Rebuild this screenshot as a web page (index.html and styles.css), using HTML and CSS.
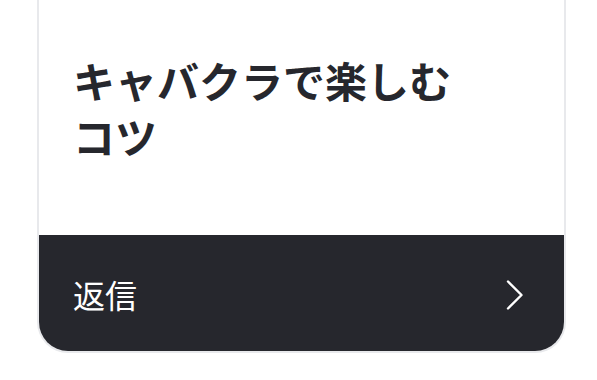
FILE: index.html
```html
<!DOCTYPE html>
<html lang="ja">
<head>
    <meta charset="UTF-8">
    <meta name="viewport" content="width=device-width, initial-scale=1.0">
    <title>キャバクラで楽しむコツ</title>
    <link rel="stylesheet" href="styles.css">
</head>
<body>
    <main class="page">
        <article class="card">
            <div class="card-body">
                <h2 class="card-title">キャバクラで楽しむ<br>コツ</h2>
            </div>
            <a class="card-foot" href="#">
                <span class="card-action">返信</span>
                <svg class="chevron" width="18" height="30" viewBox="0 0 18 30" fill="none">
                    <path d="M2 1.5 L15.5 15 L2 28.5" stroke="#fff" stroke-width="2.4" stroke-linecap="round" stroke-linejoin="round"/>
                </svg>
            </a>
        </article>
    </main>
</body>
</html>
```

FILE: styles.css
```css
body {
    margin: 0;
    padding: 0;
    background-color: #fff;
    font-family: "Noto Sans CJK JP", "Noto Sans", sans-serif;
    color: #26272d;
}
.page {
    padding: 0 31px 0 37px;
}
.card {
    border: 2px solid #e8e9ec;
    border-top: none;
    border-radius: 0 0 31px 31px;
    overflow: hidden;
    background-color: #fff;
}
.card-body {
    height: 235px;
    box-sizing: border-box;
    padding: 52px 34px 0;
}
.card-title {
    margin: 0;
    font-size: 42px;
    font-weight: 700;
    line-height: 56px;
}
.card-foot {
    display: flex;
    align-items: center;
    justify-content: space-between;
    height: 116px;
    padding: 0 40px 0 34px;
    background-color: #26272d;
    color: #fff;
    text-decoration: none;
}
.card-action {
    font-size: 32px;
    line-height: 1;
    margin-top: 1px;
}
.chevron {
    display: block;
    margin-top: 4px;
}
```
